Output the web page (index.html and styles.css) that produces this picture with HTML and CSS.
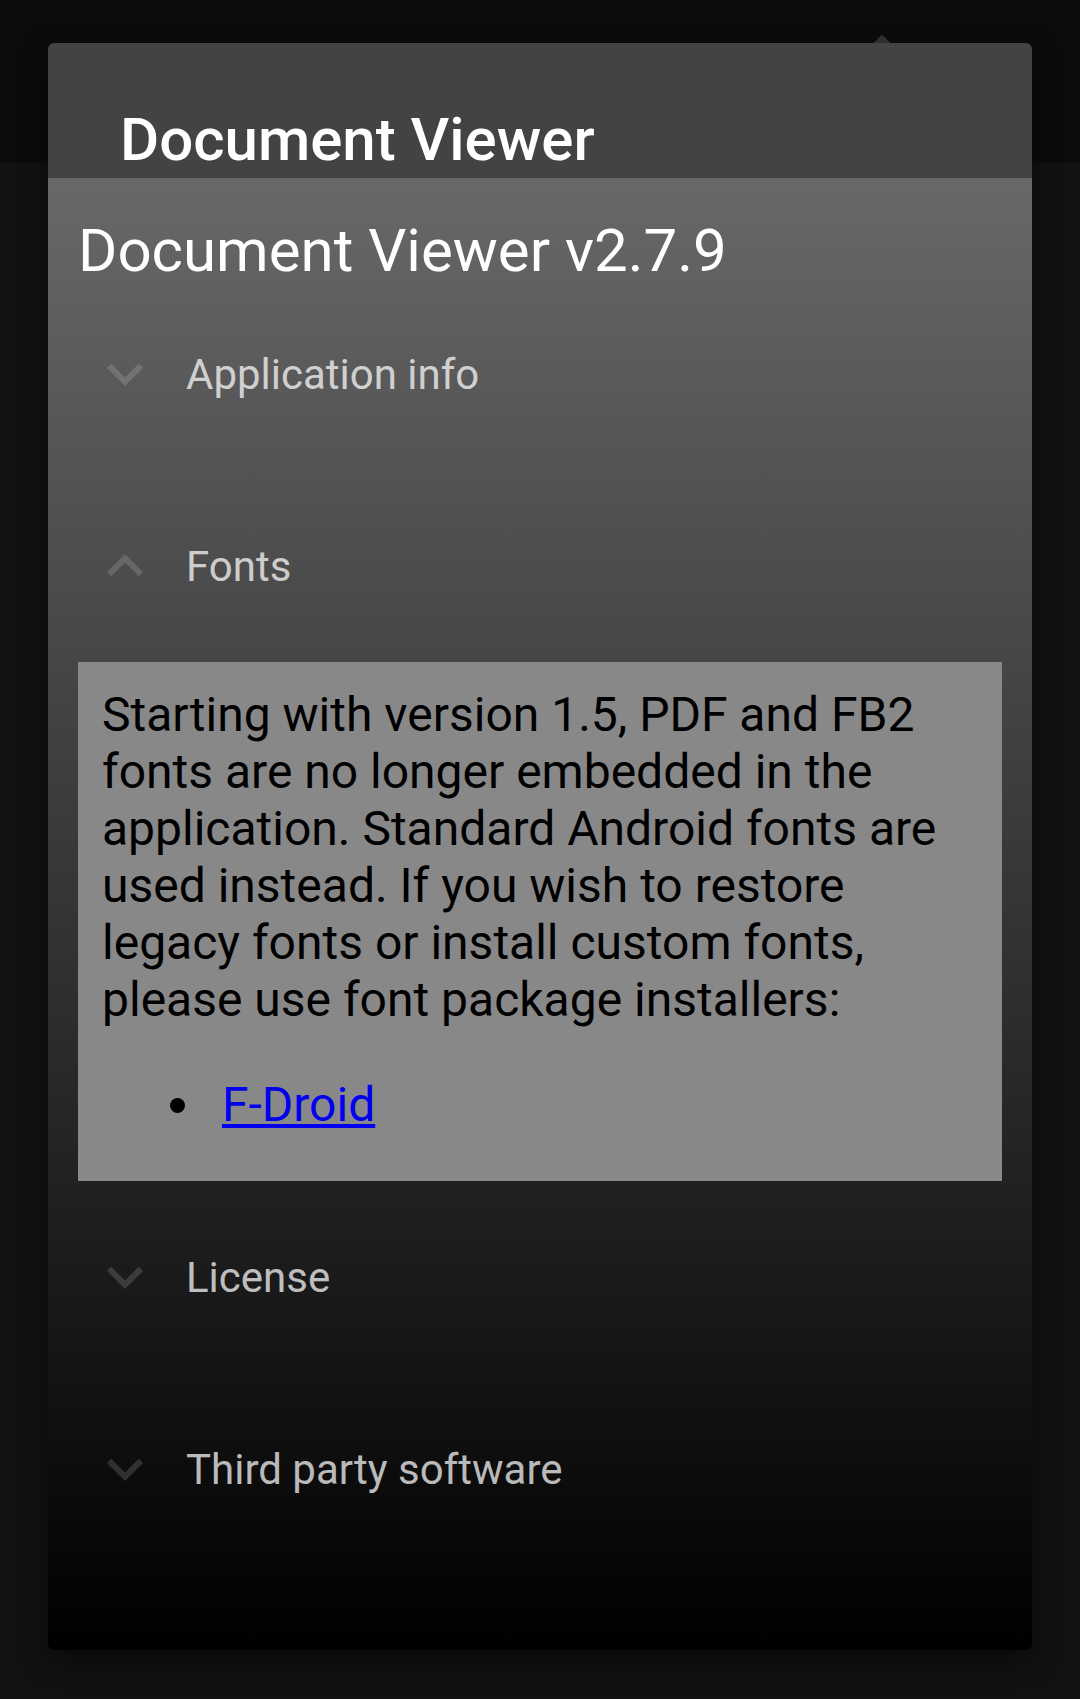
FILE: index.html
```html
<!DOCTYPE html>
<html lang="en">
<head>
<meta charset="utf-8">
<title>Document Viewer</title>
<link rel="stylesheet" href="styles.css">
</head>
<body>
  <div class="app">
    <div class="toolbar"><span class="popup-tip"></span></div>
    <div class="app-body"></div>
  </div>

  <div class="dialog">
    <div class="dialog-title">Document Viewer</div>
    <div class="dialog-content">
      <div class="app-version">Document Viewer v2.7.9</div>

      <div class="group">
        <svg class="chev" viewBox="0 0 24 24"><path d="M16.59 8.59L12 13.17 7.41 8.59 6 10l6 6 6-6z"/></svg>
        <span class="group-label">Application info</span>
      </div>

      <div class="group">
        <svg class="chev" viewBox="0 0 24 24"><path d="M12 8l-6 6 1.41 1.41L12 10.83l4.59 4.58L18 14z"/></svg>
        <span class="group-label">Fonts</span>
      </div>

      <div class="webview">
        <div class="wv-text">Starting with version 1.5, PDF and FB2 fonts are no longer embedded in the application. Standard Android fonts are used instead. If you wish to restore legacy fonts or install custom fonts, please use font package installers:</div>
        <ul class="wv-list">
          <li class="wv-item"><a href="#">F-Droid</a></li>
        </ul>
      </div>

      <div class="group">
        <svg class="chev" viewBox="0 0 24 24"><path d="M16.59 8.59L12 13.17 7.41 8.59 6 10l6 6 6-6z"/></svg>
        <span class="group-label">License</span>
      </div>

      <div class="group">
        <svg class="chev" viewBox="0 0 24 24"><path d="M16.59 8.59L12 13.17 7.41 8.59 6 10l6 6 6-6z"/></svg>
        <span class="group-label">Third party software</span>
      </div>
    </div>
  </div>
</body>
</html>
```

FILE: styles.css
```css
html, body {
  margin: 0;
  padding: 0;
}

body {
  width: 1080px;
  height: 1699px;
  position: relative;
  overflow: hidden;
  background: #121212;
  font-family: Roboto, "Noto Sans", "Liberation Sans", sans-serif;
}

.app {
  display: flex;
  flex-direction: column;
  height: 100%;
}

.toolbar {
  height: 163px;
  background: #0c0c0c;
  position: relative;
}

.popup-tip {
  position: absolute;
  left: 876px;
  top: 37px;
  width: 12px;
  height: 12px;
  background: #353535;
  transform: rotate(45deg);
}

.app-body {
  flex: 1;
  background: #121212;
}

.dialog {
  position: absolute;
  left: 48px;
  top: 43px;
  width: 984px;
  height: 1607px;
  border-radius: 6px;
  overflow: hidden;
  display: flex;
  flex-direction: column;
  box-shadow: 0 10px 30px rgba(0, 0, 0, 0.55);
}

.dialog-title {
  height: 135px;
  box-sizing: border-box;
  padding: 62px 0 0 72px;
  background: #434343;
  color: #ffffff;
  font-size: 60px;
  font-weight: 500;
  line-height: 70px;
  white-space: nowrap;
}

.dialog-content {
  flex: 1;
  padding: 0 30px;
  background: linear-gradient(#686868, #000000);
}

.app-version {
  height: 100px;
  box-sizing: border-box;
  padding-top: 46px;
  font-size: 60px;
  line-height: 54px;
  color: #ffffff;
  white-space: nowrap;
}

.group {
  height: 192px;
  display: flex;
  align-items: center;
  padding-left: 11px;
}

.chev {
  width: 72px;
  height: 72px;
  flex: none;
  margin-right: 25px;
  fill: rgba(255, 255, 255, 0.15);
}

.group-label {
  font-size: 42px;
  color: rgba(255, 255, 255, 0.72);
}

.webview {
  background: #888888;
  padding: 24px 24px 48px;
  color: #000000;
  font-size: 48px;
  line-height: 57px;
}

.wv-list {
  margin: 48px 0 0;
  padding-left: 120px;
  list-style: none;
}

.wv-item {
  position: relative;
}

.wv-item::before {
  content: "";
  position: absolute;
  left: -52px;
  top: 22px;
  width: 15px;
  height: 15px;
  border-radius: 50%;
  background: #000000;
}

.wv-list a {
  color: #0000ee;
}
```
